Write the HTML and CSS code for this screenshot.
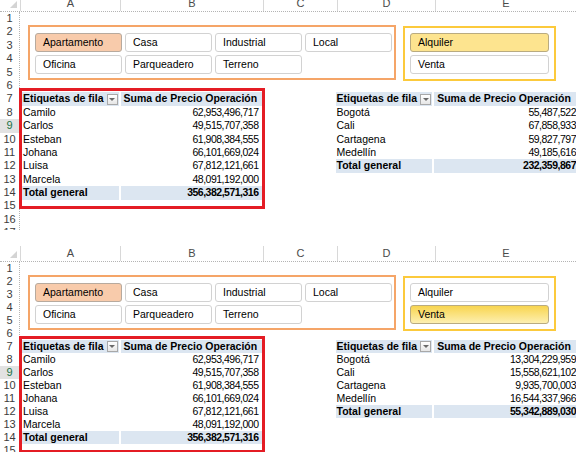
FILE: index.html
```html
<!DOCTYPE html>
<html lang="es">
<head>
<meta charset="UTF-8">
<meta name="viewport" content="width=device-width, initial-scale=1.0">
<title>Segmentación de datos - Precio Operación</title>
<link rel="stylesheet" href="styles.css">
</head>
<body>

<!-- Captura 1: Apartamento + Alquiler -->
<div class="shot shot-top">
    <div class="colheads">
        <div class="corner"><span class="corner-tri"></span></div>
        <div class="colhead col-a">A</div>
        <div class="colhead col-b">B</div>
        <div class="colhead col-c">C</div>
        <div class="colhead col-d">D</div>
        <div class="colhead col-e">E</div>
    </div>
    <div class="sheet">
        <div class="rownums">
            <div class="rownum">1</div>
            <div class="rownum">2</div>
            <div class="rownum">3</div>
            <div class="rownum">4</div>
            <div class="rownum">5</div>
            <div class="rownum">6</div>
            <div class="rownum">7</div>
            <div class="rownum">8</div>
            <div class="rownum current">9</div>
            <div class="rownum">10</div>
            <div class="rownum">11</div>
            <div class="rownum">12</div>
            <div class="rownum">13</div>
            <div class="rownum">14</div>
            <div class="rownum">15</div>
            <div class="rownum">16</div>
            <div class="rownum">17</div>
        </div>
        <div class="cells">
            <div class="slicers">
                <div class="slicer slicer-tipo">
                    <div class="item on-orange">Apartamento</div>
                    <div class="item">Casa</div>
                    <div class="item">Industrial</div>
                    <div class="item">Local</div>
                    <div class="item">Oficina</div>
                    <div class="item">Parqueadero</div>
                    <div class="item">Terreno</div>
                </div>
                <div class="slicer slicer-op">
                    <div class="item on-yellow">Alquiler</div>
                    <div class="item">Venta</div>
                </div>
            </div>
            <div class="pivots">
                <div class="marked">
                    <table class="pivot pivot-left">
                        <tr class="head">
                            <td class="lbl"><span class="lbl-wrap">Etiquetas de fila <span class="dd"></span></span></td>
                            <td class="val">Suma de Precio Operación</td>
                        </tr>
                        <tr><td class="lbl">Camilo</td><td class="num">62,953,496,717</td></tr>
                        <tr><td class="lbl">Carlos</td><td class="num">49,515,707,358</td></tr>
                        <tr><td class="lbl">Esteban</td><td class="num">61,908,384,555</td></tr>
                        <tr><td class="lbl">Johana</td><td class="num">66,101,669,024</td></tr>
                        <tr><td class="lbl">Luisa</td><td class="num">67,812,121,661</td></tr>
                        <tr><td class="lbl">Marcela</td><td class="num">48,091,192,000</td></tr>
                        <tr class="total"><td class="lbl">Total general</td><td class="num">356,382,571,316</td></tr>
                    </table>
                </div>
                <table class="pivot pivot-right">
                    <tr class="head">
                        <td class="lbl"><span class="lbl-wrap">Etiquetas de fila <span class="dd"></span></span></td>
                        <td class="val">Suma de Precio Operación</td>
                    </tr>
                    <tr><td class="lbl">Bogotá</td><td class="num">55,487,522</td></tr>
                    <tr><td class="lbl">Cali</td><td class="num">67,858,933</td></tr>
                    <tr><td class="lbl">Cartagena</td><td class="num">59,827,797</td></tr>
                    <tr><td class="lbl">Medellín</td><td class="num">49,185,616</td></tr>
                    <tr class="total"><td class="lbl">Total general</td><td class="num">232,359,867</td></tr>
                </table>
            </div>
        </div>
    </div>
</div>

<!-- Captura 2: Apartamento + Venta -->
<div class="shot shot-bottom">
    <div class="colheads">
        <div class="corner"><span class="corner-tri"></span></div>
        <div class="colhead col-a">A</div>
        <div class="colhead col-b">B</div>
        <div class="colhead col-c">C</div>
        <div class="colhead col-d">D</div>
        <div class="colhead col-e">E</div>
    </div>
    <div class="sheet">
        <div class="rownums">
            <div class="rownum">1</div>
            <div class="rownum">2</div>
            <div class="rownum">3</div>
            <div class="rownum">4</div>
            <div class="rownum">5</div>
            <div class="rownum">6</div>
            <div class="rownum">7</div>
            <div class="rownum">8</div>
            <div class="rownum current">9</div>
            <div class="rownum">10</div>
            <div class="rownum">11</div>
            <div class="rownum">12</div>
            <div class="rownum">13</div>
            <div class="rownum">14</div>
            <div class="rownum">15</div>
        </div>
        <div class="cells">
            <div class="slicers">
                <div class="slicer slicer-tipo">
                    <div class="item on-orange">Apartamento</div>
                    <div class="item">Casa</div>
                    <div class="item">Industrial</div>
                    <div class="item">Local</div>
                    <div class="item">Oficina</div>
                    <div class="item">Parqueadero</div>
                    <div class="item">Terreno</div>
                </div>
                <div class="slicer slicer-op">
                    <div class="item">Alquiler</div>
                    <div class="item on-hover">Venta</div>
                </div>
            </div>
            <div class="pivots">
                <div class="marked">
                    <table class="pivot pivot-left">
                        <tr class="head">
                            <td class="lbl"><span class="lbl-wrap">Etiquetas de fila <span class="dd"></span></span></td>
                            <td class="val">Suma de Precio Operación</td>
                        </tr>
                        <tr><td class="lbl">Camilo</td><td class="num">62,953,496,717</td></tr>
                        <tr><td class="lbl">Carlos</td><td class="num">49,515,707,358</td></tr>
                        <tr><td class="lbl">Esteban</td><td class="num">61,908,384,555</td></tr>
                        <tr><td class="lbl">Johana</td><td class="num">66,101,669,024</td></tr>
                        <tr><td class="lbl">Luisa</td><td class="num">67,812,121,661</td></tr>
                        <tr><td class="lbl">Marcela</td><td class="num">48,091,192,000</td></tr>
                        <tr class="total"><td class="lbl">Total general</td><td class="num">356,382,571,316</td></tr>
                    </table>
                </div>
                <table class="pivot pivot-right">
                    <tr class="head">
                        <td class="lbl"><span class="lbl-wrap">Etiquetas de fila <span class="dd"></span></span></td>
                        <td class="val">Suma de Precio Operación</td>
                    </tr>
                    <tr><td class="lbl">Bogotá</td><td class="num">13,304,229,959</td></tr>
                    <tr><td class="lbl">Cali</td><td class="num">15,558,621,102</td></tr>
                    <tr><td class="lbl">Cartagena</td><td class="num">9,935,700,003</td></tr>
                    <tr><td class="lbl">Medellín</td><td class="num">16,544,337,966</td></tr>
                    <tr class="total"><td class="lbl">Total general</td><td class="num">55,342,889,030</td></tr>
                </table>
            </div>
        </div>
    </div>
</div>

</body>
</html>
```

FILE: styles.css
```css
body {
    margin: 0;
    background: #fff;
    font-family: "Liberation Sans", Arial, sans-serif;
    font-size: 10.5px;
    color: #000;
}
.shot {
    width: 576px;
    overflow: hidden;
}
.shot-top {
    --rh: 13.4px;
    height: 230px;
}
.shot-top .colheads {
    margin-top: -4px;
}
.shot-bottom {
    --rh: 13px;
    height: 206px;
    margin-top: 16px;
}

/* encabezados de columna */
.colheads {
    display: flex;
    height: 16px;
    border-bottom: 1px dotted #b4b4b4;
    box-sizing: border-box;
}
.corner {
    width: 20px;
    flex: none;
    display: flex;
    justify-content: flex-end;
    align-items: flex-end;
    padding: 0 3px 3px 0;
    box-sizing: border-box;
}
.corner-tri {
    width: 0;
    height: 0;
    border-left: 7px solid transparent;
    border-bottom: 7px solid #d4d4d4;
}
.colhead {
    flex: none;
    text-align: center;
    line-height: 15px;
    color: #4a4a4a;
    font-size: 11px;
    border-left: 1px solid #d8d8d8;
    box-sizing: border-box;
}
.col-a { width: 100px; }
.col-b { width: 143px; }
.col-c { width: 74px; }
.col-d { width: 98px; }
.col-e { width: 141px; }

/* filas */
.sheet {
    display: flex;
}
.rownums {
    width: 20px;
    flex: none;
    border-right: 1px dotted #b4b4b4;
    box-sizing: border-box;
}
.rownum {
    height: var(--rh);
    line-height: var(--rh);
    text-align: center;
    color: #3c3c3c;
    font-size: 11px;
}
.rownum.current {
    background: #e2e2e2;
    color: #217346;
}
.cells {
    flex: 1;
    min-width: 0;
}

/* segmentaciones */
.slicers {
    display: flex;
    align-items: flex-start;
    gap: 7px;
    margin: 13px 0 0 8px;
    height: 55px;
}
.slicer {
    display: grid;
    gap: 3px;
    align-content: start;
    height: 55px;
    box-sizing: border-box;
    background: #fff;
}
.slicer-tipo {
    width: 368px;
    border: 2px solid #f5a568;
    padding: 6px 3px 0 5px;
    grid-template-columns: repeat(4, 87px);
}
.slicer-op {
    width: 153px;
    margin-top: 1px;
    border: 2px solid #fcca3c;
    padding: 5px 5px 0 5px;
    grid-template-columns: 139px;
}
.item {
    height: 19px;
    line-height: 17px;
    padding-left: 7px;
    border: 1px solid #d2d2d2;
    border-radius: 3px;
    box-sizing: border-box;
    background: #fff;
}
.item.on-orange {
    background: #f8cbab;
    border-color: #b7aa9e;
}
.item.on-yellow {
    background: #fde48f;
    border-color: #b9ab80;
}
.item.on-hover {
    background: linear-gradient(#f8d54f, #fdefb0);
    border-color: #b9ab80;
}

/* tablas dinamicas */
.pivots {
    display: flex;
    align-items: flex-start;
    margin-top: calc(6 * var(--rh) - 68px);
}
.marked {
    margin: -4px 0 0 -1px;
    border: 3px solid #e41c24;
    padding: 1px 0 6px 0;
}
.pivot-right {
    margin-left: 71px;
}
.pivot {
    border-collapse: collapse;
    table-layout: fixed;
}
.pivot td {
    height: var(--rh);
    line-height: var(--rh);
    padding: 0;
    white-space: nowrap;
    overflow: hidden;
}
.pivot-left td.lbl { width: 97px; padding-left: 1px; }
.pivot-left td.val,
.pivot-left td.num { width: 140px; }
.pivot-right td.lbl { width: 97px; padding-left: 1px; }
.pivot-right td.val,
.pivot-right td.num { width: 141px; }
.pivot td.val {
    padding-left: 3px;
}
.pivot td.num {
    text-align: right;
    letter-spacing: -0.5px;
}
.pivot-left td.num {
    padding-right: 3px;
}
.pivot .head td,
.pivot .total td {
    background: #dce6f1;
    font-weight: bold;
}
.pivot .head td.lbl,
.pivot .total td.lbl {
    border-right: 2px solid #fff;
}
.lbl-wrap {
    display: flex;
    align-items: center;
    justify-content: space-between;
    padding-right: 1px;
}
.dd {
    width: 11px;
    height: 11px;
    box-sizing: border-box;
    border: 1px solid #a8a8a8;
    background: linear-gradient(#fff, #e6e6e6);
    display: flex;
    align-items: center;
    justify-content: center;
}
.dd::after {
    content: "";
    border-left: 3px solid transparent;
    border-right: 3px solid transparent;
    border-top: 3px solid #6a6a6a;
}
```
